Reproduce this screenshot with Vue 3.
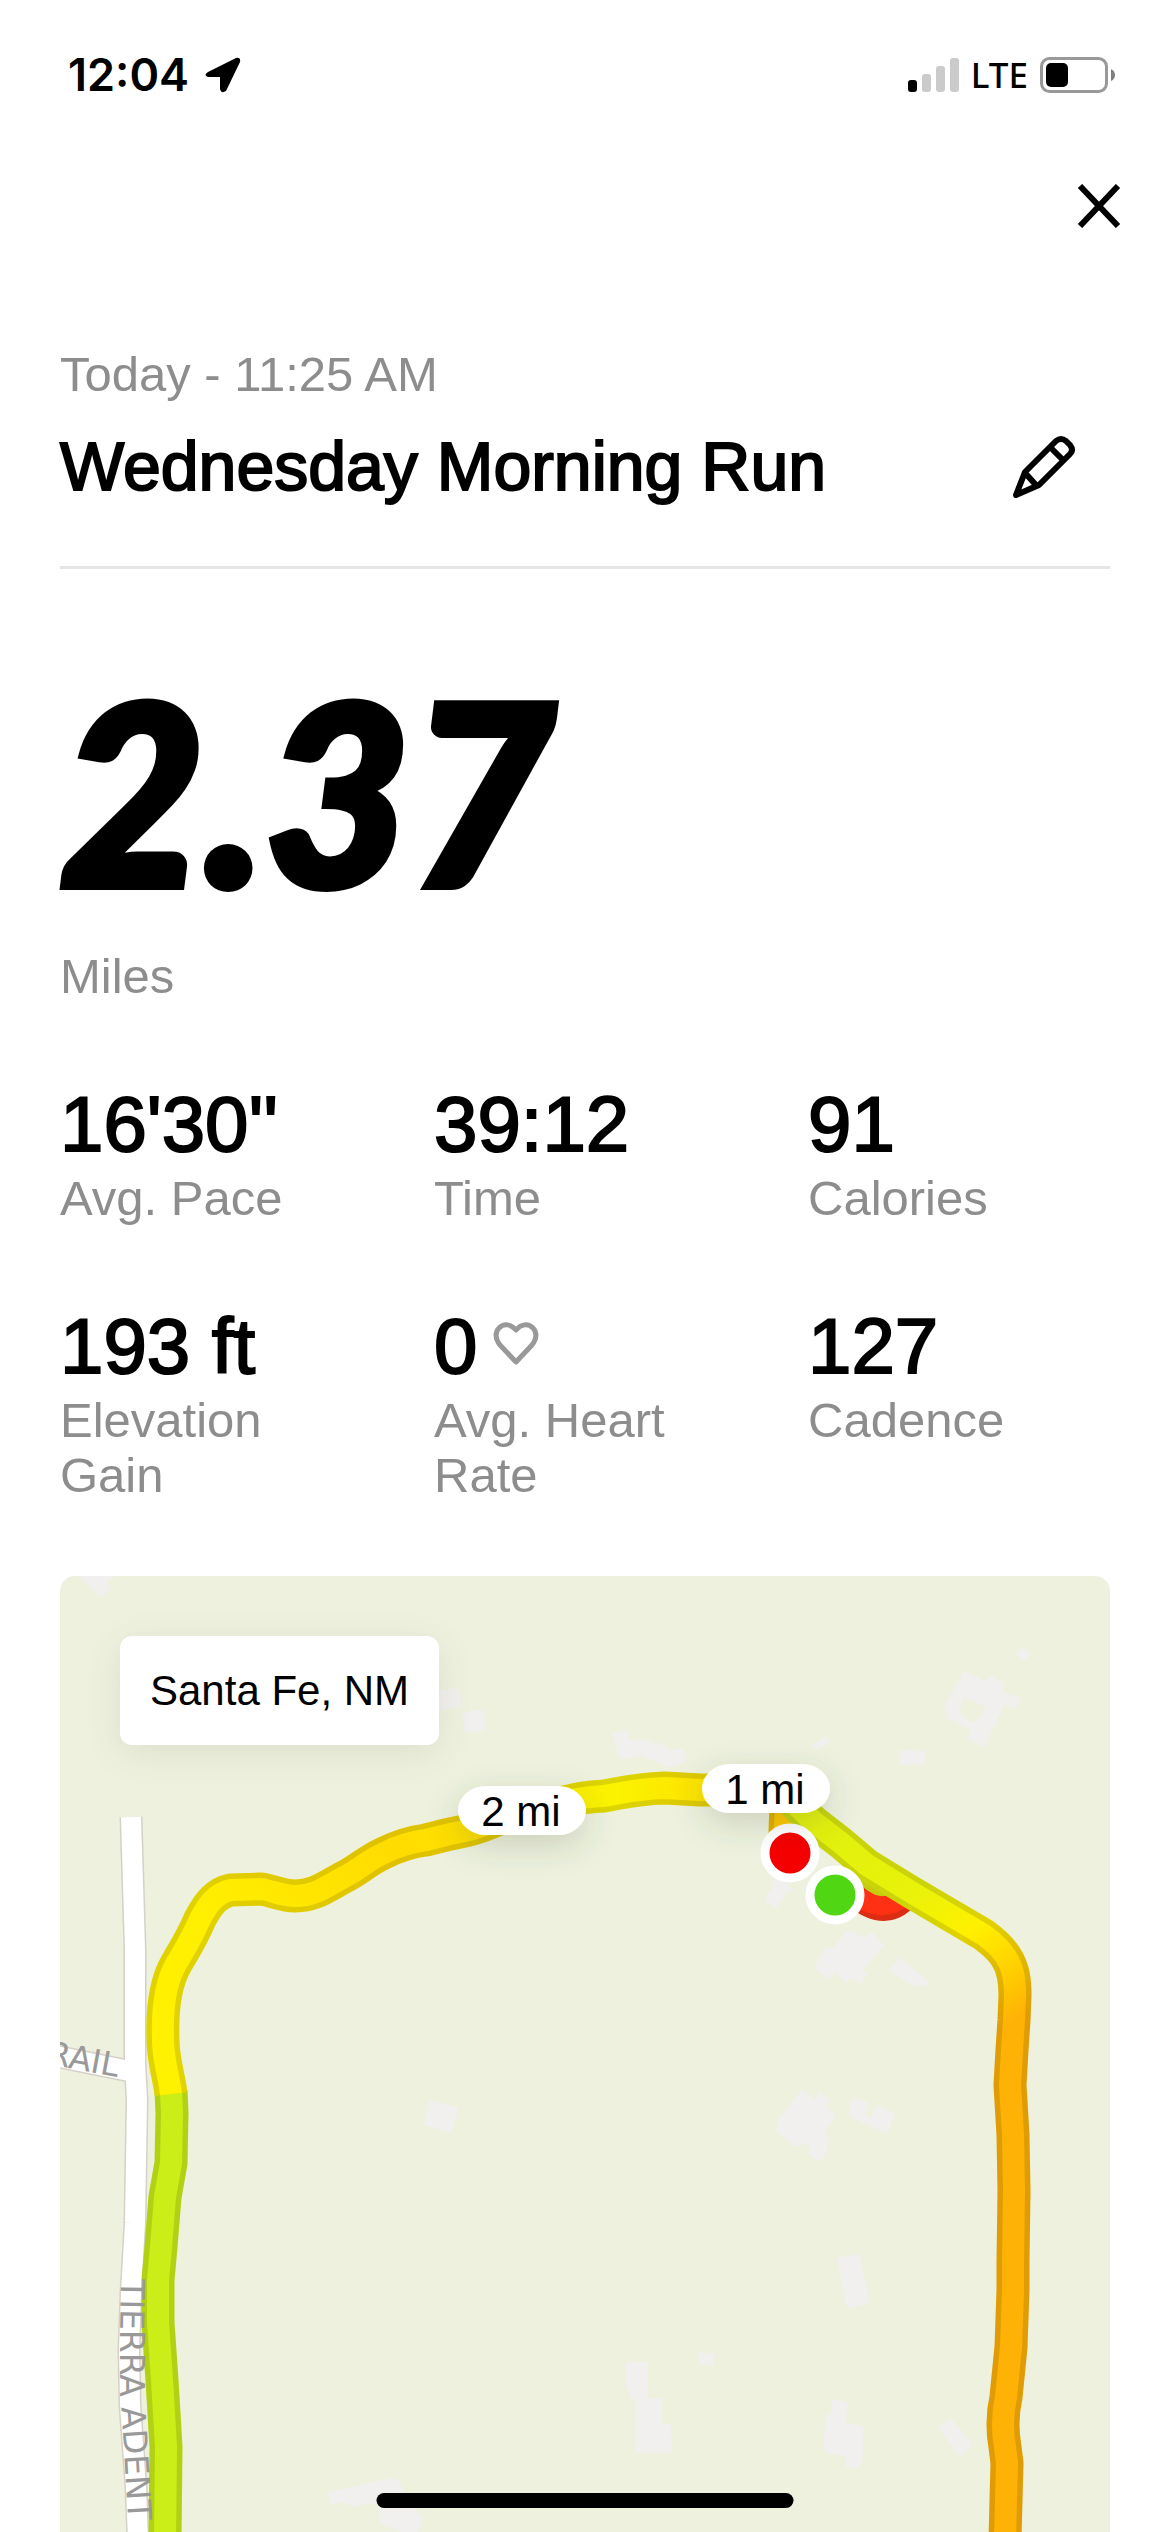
<script setup>
const stats = [
  { value: "16'30''", label: 'Avg. Pace' },
  { value: '39:12', label: 'Time' },
  { value: '91', label: 'Calories' },
  { value: '193 ft', label: 'Elevation Gain' },
  { value: '0', label: 'Avg. Heart Rate', heart: true },
  { value: '127', label: 'Cadence' },
]

const buildings = [
  'M79 1576L101 1597L111 1589L106 1583L115 1576Z',
  'M438 1691L457 1687L462 1706L438 1711Z',
  'M462 1713L482 1709L486 1730L465 1733Z',
  'M612 1733L628 1730L629 1740L647 1740L656 1744L661 1742L668 1750L684 1749L685 1763L668 1767L641 1756L620 1759Z',
  'M811 1745L826 1737L829 1742L816 1751Z',
  'M899 1750L925 1751L926 1764L900 1765Z',
  'M1016 1655L1022 1647L1030 1653L1025 1661Z',
  'M964 1671L986 1681L990 1675L1004 1683L1003 1692L1021 1698L1016 1709L1004 1705L984 1747L967 1739L970 1729L945 1717L948 1713L943 1709ZM964 1697L959 1713L971 1723L978 1720L986 1707Z',
  'M764 1900L774 1885L769 1882L782 1878L793 1890L785 1895L776 1909Z',
  'M813 1968L827 1947L833 1948L847 1930L864 1937L873 1932L884 1946L869 1963L863 1969L867 1975L860 1984L852 1978L845 1983L836 1973L829 1979Z',
  'M889 1971L899 1957L929 1982L927 1987L921 1985L916 1987Z',
  'M802 2089L815 2099L820 2092L831 2100L827 2107L836 2116L824 2132L829 2137L826 2147L828 2151L820 2162L808 2154L810 2147L803 2143L796 2147L775 2130L780 2123L777 2121Z',
  'M853 2097L869 2103L865 2116L871 2117L877 2105L895 2113L887 2134L849 2116L850 2102Z',
  'M837 2258L860 2254L869 2304L847 2308Z',
  'M699 2353L713 2353L714 2365L699 2365Z',
  'M626 2362L648 2362L648 2398L662 2398L662 2424L671 2424L672 2453L635 2453L635 2399L631 2399L626 2387Z',
  'M828 2398L848 2402L845 2423L863 2426L863 2456L859 2468L845 2467L846 2456L825 2453L823 2437L827 2415L831 2414L832 2405Z',
  'M938 2428L951 2418L973 2445L960 2457Z',
  'M430 2100L459 2108L451 2133L424 2125Z',
  'M328 2492L392 2478L400 2482L404 2493L423 2519L415 2540L401 2532L379 2522L379 2503L351 2506L344 2502L330 2504Z',
]

const mainRoad = 'M131 1817L135 1950L135 2063L137 2100L135 2223L131 2293L129 2350L130 2405L136 2487L138 2540'
const sideRoad = 'M50 2055L134 2072'

const route = [
  {
    paint: '#cbee18',
    d: 'M165 2540L166 2447L162 2380L158 2323L158 2280L161 2247L165 2197L171 2163L172 2113L171 2091',
  },
  {
    paint: 'url(#west)',
    d: 'M171 2094C169 2076 163 2060 163 2040C162 2012 164 1985 176 1964C186 1947 192 1938 200 1919C208 1904 216 1893 231 1890L261 1889C274 1891 282 1896 295 1896C314 1896 324 1888 344 1877C357 1871 368 1860 384 1853C398 1846 410 1842 426 1840C441 1836 454 1833 469 1830C485 1826 495 1821 504 1817',
  },
  {
    paint: 'url(#north)',
    d: 'M504 1817C526 1812 544 1806 569 1801C582 1797 590 1797 604 1796C622 1793 634 1789 665 1788L700 1790L760 1790',
  },
  { paint: '#ffc800', d: 'M787 1800Q785 1815 785 1840' },
  {
    paint: 'url(#east)',
    d: 'M785 1792C796 1806 804 1813 814 1822L841 1843L867 1865L911 1892L950 1915L984 1935Q1000 1947 1006 1957C1014 1969 1015 1982 1015 1995L1014 2020L1012 2050L1010 2085L1013 2135L1014 2190L1013 2263L1013 2290L1011 2347L1006 2397C1002 2415 1002 2430 1005 2447L1007 2463L1006 2500L1005 2540',
  },
]
</script>

<template>
  <main class="screen">
    <div class="status">
      <div class="status-side">
        <span class="clock">12:04</span>
        <svg width="36" height="36" viewBox="0 0 36 36" aria-hidden="true">
          <path d="M3 15L31 1Q36 0 35 5L21 34Q16 37 15 32V20H3Q-2 18 3 15Z" />
        </svg>
      </div>
      <div class="status-side status-right">
        <svg width="51" height="34" viewBox="0 0 51 34" aria-hidden="true">
          <rect y="22" width="9" height="12" rx="3" />
          <g fill="#cbcbcb">
            <rect x="14" y="16" width="9" height="18" rx="3" />
            <rect x="28" y="8" width="9" height="26" rx="3" />
            <rect x="42" width="9" height="34" rx="3" />
          </g>
        </svg>
        <span class="network">LTE</span>
        <svg width="75" height="36" viewBox="0 0 75 36" aria-hidden="true">
          <rect x="1.5" y="1.5" width="65" height="33" rx="8" fill="none" stroke="#999" stroke-width="3" />
          <rect x="6" y="6" width="22" height="24" rx="5" />
          <path d="M71 12Q75 14 75 18Q75 22 71 24Z" fill="#808080" />
        </svg>
      </div>
    </div>

    <div class="toolbar">
      <button class="icon-button" type="button" aria-label="Close">
        <svg width="44" height="44" viewBox="0 0 44 44" fill="none" stroke="#000" stroke-width="6">
          <path d="M3 2L41 42M41 2L3 42" />
        </svg>
      </button>
    </div>

    <div class="content">
      <header class="heading">
        <p class="date">Today - 11:25 AM</p>
        <div class="title-row">
          <h1>Wednesday Morning Run</h1>
          <button class="icon-button" type="button" aria-label="Edit name">
            <svg width="64" height="64" viewBox="14 15 64 64" fill="none" stroke="#000" stroke-width="6" stroke-linejoin="round">
              <path d="M17 76L26 53L57 22Q62 18 67 22L71 26Q75 31 71 35L40 66ZM53 30L65 42M27 55L37 66" />
            </svg>
          </button>
        </div>
      </header>

      <section class="distance">
        <p class="miles">2.37</p>
        <p class="label">Miles</p>
      </section>

      <dl class="stats">
        <div v-for="stat in stats" :key="stat.label" class="stat">
          <dt class="label">{{ stat.label }}</dt>
          <dd>
            {{ stat.value }}
            <svg v-if="stat.heart" class="heart" width="46" height="46" viewBox="0 0 46 46" fill="none" stroke="#999" stroke-width="5" stroke-linejoin="round" aria-hidden="true">
              <path d="M23 42L7 25C2 19 2 12 6 8C11 3 18 4 23 10C28 4 35 3 40 8C44 12 44 19 39 25Z" />
            </svg>
          </dd>
        </div>
      </dl>

      <section class="map" aria-label="Route map">
        <svg class="map-canvas" viewBox="60 1576 1050 956">
          <defs>
            <linearGradient id="west" gradientUnits="userSpaceOnUse" x1="170" y1="2090" x2="500" y2="1817">
              <stop offset="0" stop-color="#fff200" />
              <stop offset="0.35" stop-color="#ffee00" />
              <stop offset="0.75" stop-color="#ffdc00" />
              <stop offset="1" stop-color="#ffe200" />
            </linearGradient>
            <linearGradient id="north" gradientUnits="userSpaceOnUse" x1="504" y1="0" x2="740" y2="0">
              <stop offset="0" stop-color="#ffe200" />
              <stop offset="0.45" stop-color="#faf400" />
              <stop offset="1" stop-color="#ffdc00" />
            </linearGradient>
            <linearGradient id="east" gradientUnits="userSpaceOnUse" x1="800" y1="1800" x2="940" y2="2060">
              <stop offset="0" stop-color="#e0f010" />
              <stop offset="0.45" stop-color="#e8f20a" />
              <stop offset="0.66" stop-color="#fff000" />
              <stop offset="0.84" stop-color="#ffd000" />
              <stop offset="1" stop-color="#ffb206" />
            </linearGradient>
            <filter id="soft" x="-50%" y="-80%" width="200%" height="280%">
              <feDropShadow dx="0" dy="10" stdDeviation="16" flood-color="#4a5238" flood-opacity="0.2" />
            </filter>
            <path id="side-name" d="M-40 2048L117 2077" />
            <path id="main-name" d="M121 2279L120 2330L120 2390L124 2450L129 2532L133 2620" />
          </defs>

          <path v-for="d in buildings" :key="d" :d="d" fill="#f1f0ee" fill-rule="evenodd" />

          <g fill="none" stroke-linejoin="round">
            <path :d="mainRoad" stroke="#d5d1c8" stroke-width="23" />
            <path :d="sideRoad" stroke="#d5d1c8" stroke-width="23" />
            <path :d="mainRoad" stroke="#fff" stroke-width="20" />
            <path :d="sideRoad" stroke="#fff" stroke-width="20" />
          </g>

          <g fill="none" stroke-linejoin="round">
            <path d="M850 1882Q880 1914 914 1887" stroke="#c8ca10" stroke-width="30" />
            <path d="M846 1888Q880 1922 903 1901" stroke="#dc2c14" stroke-width="24" />
            <path d="M850 1890Q880 1918 906 1896" stroke="#ff3014" stroke-width="19" />
            <g v-for="part in route" :key="part.d">
              <path :d="part.d" :stroke="part.paint" stroke-width="33" />
              <path :d="part.d" stroke="#000" stroke-opacity="0.12" stroke-width="33" />
              <path :d="part.d" :stroke="part.paint" stroke-width="22" />
            </g>
          </g>

          <g class="road-name">
            <text text-anchor="end">
              <textPath href="#side-name" startOffset="100%">RAIL</textPath>
            </text>
            <text><textPath href="#main-name">TIERRA ADENT</textPath></text>
          </g>

          <g stroke="#fff" stroke-width="9">
            <circle cx="790" cy="1853" r="25" fill="#f50000" />
            <circle cx="835" cy="1895" r="25" fill="#50d612" />
          </g>

          <g class="mile">
            <rect x="458" y="1786" width="128" height="49" rx="28" filter="url(#soft)" />
            <text x="521" y="1826">2 mi</text>
            <rect x="702" y="1764" width="128" height="49" rx="28" filter="url(#soft)" />
            <text x="765" y="1804">1 mi</text>
          </g>
        </svg>
        <p class="place">Santa Fe, NM</p>
      </section>
    </div>

    <div class="home-bar"></div>
  </main>
</template>

<style>
body {
  margin: 0;
  background: #fff;
}
</style>

<style scoped>
.screen {
  color: #000;
  font-family: "Liberation Sans", Arial, sans-serif;
}

p,
h1,
dl,
dd {
  margin: 0;
}

svg {
  display: block;
  flex: none;
}

.status {
  display: flex;
  justify-content: space-between;
  padding: 48px 55px 0 68px;
}

.status-side {
  display: flex;
  align-items: center;
  gap: 16px;
  font-family: Inter, sans-serif;
  line-height: 54px;
}

.status-right {
  gap: 12px;
}

.clock {
  font-size: 45px;
  font-weight: 600;
}

.network {
  font-family: "Noto Sans", sans-serif;
  font-size: 35px;
  font-weight: 500;
}

.icon-button {
  padding: 0;
  border: 0;
  background: none;
  cursor: pointer;
}

.toolbar {
  display: flex;
  justify-content: flex-end;
  padding: 82px 49px 0 0;
}

.content {
  padding: 119px 60px 0;
}

.heading {
  padding-bottom: 60px;
  border-bottom: 3px solid #e5e5e5;
}

.date,
.label {
  color: #8d8d8d;
  font-size: 49px;
  line-height: 55px;
}

.title-row {
  display: flex;
  align-items: center;
  justify-content: space-between;
  margin-top: 24px;
  padding-right: 33px;
}

h1 {
  font-size: 68px;
  font-weight: 400;
  line-height: 80px;
  -webkit-text-stroke: 2px #000;
}

.distance {
  padding: 120px 0 80px;
}

.miles {
  margin-bottom: 60px;
  font-family: Lato, sans-serif;
  font-size: 250px;
  font-style: italic;
  font-weight: 900;
  line-height: 200px;
  -webkit-text-stroke: 8px #000;
}

.stats {
  display: grid;
  grid-template-columns: repeat(3, 1fr);
  gap: 80px 72px;
  margin-bottom: 73px;
}

.stat {
  display: flex;
  flex-direction: column-reverse;
  justify-content: flex-end;
  gap: 7px;
}

dd {
  display: flex;
  align-items: center;
  gap: 16px;
  font-size: 78px;
  line-height: 80px;
  -webkit-text-stroke: 2px #000;
}

.heart {
  margin-bottom: 6px;
}

.map {
  position: relative;
  overflow: hidden;
  border-radius: 15px 15px 0 0;
  background: #edf1de;
}

.map-canvas {
  width: 100%;
  height: auto;
}

.place {
  position: absolute;
  top: 60px;
  left: 60px;
  padding: 30px;
  border-radius: 12px;
  background: #fff;
  box-shadow: 0 8px 36px rgba(74, 82, 56, 0.1);
  font-size: 42px;
  line-height: 49px;
}

.mile rect {
  fill: #fff;
}

.mile text {
  font-size: 42px;
  text-anchor: middle;
}

.road-name {
  fill: #999;
  font-family: "DejaVu Sans", sans-serif;
  font-size: 33px;
}

.home-bar {
  position: fixed;
  bottom: 24px;
  left: 50%;
  width: 417px;
  height: 15px;
  border-radius: 8px;
  background: #000;
  transform: translateX(-50%);
}
</style>
